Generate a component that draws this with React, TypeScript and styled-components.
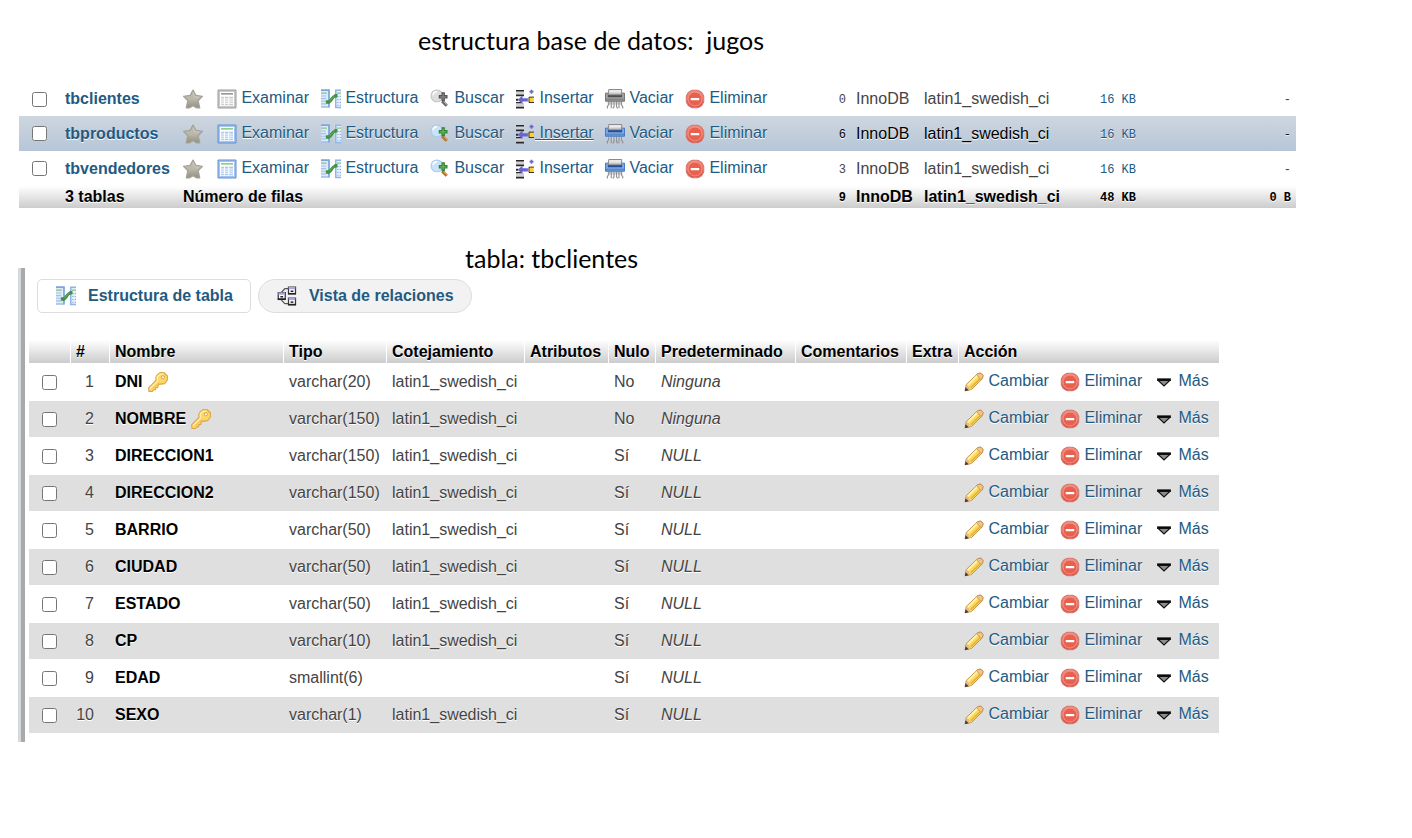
import React, { useId } from "react";
import styled, { createGlobalStyle } from "styled-components";

const GlobalStyle = createGlobalStyle`
  body {
    margin: 0;
    background: #fff;
    color: #444;
    font-family: "Liberation Sans", Arial, sans-serif;
    font-size: 16px;
    line-height: 20px;
  }
`;

const Page = styled.main`
  padding: 24px 0 24px 18px;
`;

const Title = styled.h1<{ $indent: number }>`
  margin: 0;
  padding-left: ${(p) => p.$indent}px;
  font-family: Lato, Calibri, sans-serif;
  font-size: 25px;
  line-height: 32px;
  font-weight: 400;
  color: #000;
  white-space: pre;
`;

const DatabaseSection = styled.section`
  margin: 26px 116px 34px 1px;
`;

const DataTable = styled.table`
  width: 100%;
  table-layout: fixed;
  border-collapse: separate;
  border-spacing: 0;
  text-shadow: 0 1px 0 #fff;
  white-space: nowrap;
`;

const Cell = styled.td<{ $align?: "right" | "center"; $endPad?: number }>`
  padding: 0 ${(p) => p.$endPad ?? 5}px 0 5px;
  text-align: ${(p) => p.$align ?? "left"};
`;

const HeadCell = styled.th`
  height: 23px;
  padding: 1px 0 0 5px;
  box-sizing: border-box;
  text-align: left;
  color: #000;
  border-right: 1px solid #fff;

  &:last-child {
    border-right: 0;
  }
`;

const HeadRow = styled.tr`
  background: linear-gradient(#fff, #ccc);
`;

const TableRow = styled.tr<{ $hover: boolean }>`
  height: ${(p) => (p.$hover ? 35 : 34)}px;
  background: ${(p) => (p.$hover ? "linear-gradient(#ced6df, #b6c6d7)" : "#fff")};
  color: ${(p) => (p.$hover ? "#000" : "#444")};

  &:last-child {
    height: 35px;
  }
`;

const TotalRow = styled.tr`
  height: 22px;
  background: linear-gradient(#fff, #ccc);
  color: #000;
  font-weight: 700;
`;

const FieldRow = styled.tr`
  height: 38px;

  &:nth-child(even) {
    height: 36px;
    background: #dfdfdf;
  }
`;

const Check = styled.input`
  display: block;
  width: 15px;
  height: 15px;
  margin: 0 8px;
`;

const Link = styled.a`
  color: #235a81;
  text-decoration: none;
`;

const NameLink = styled(Link)`
  font-weight: 700;
`;

const Action = styled(Link)`
  display: flex;
  align-items: center;
`;

const ActionText = styled.span<{ $underlined?: boolean }>`
  white-space: pre;
  padding-bottom: 2px;
  text-decoration: ${(p) => (p.$underlined ? "underline" : "none")};
`;

const Mono = styled.span`
  font-family: "Liberation Mono", Consolas, monospace;
  font-size: 12px;
`;

const FieldName = styled.div`
  display: flex;
  align-items: center;
  gap: 5px;
  color: #000;
  font-weight: 700;
`;

const Panel = styled.section`
  margin-right: 193px;
  padding: 11px 0 9px 4px;
  border-left: 4px solid #a9a9a9;
`;

const PanelEdge = styled.div`
  margin-top: -6px;
  border-left: 3px solid #d3d9dd;
`;

const TabBar = styled.nav`
  display: flex;
  gap: 7px;
  margin: 0 0 27px 8px;
`;

const Tab = styled.a<{ $active?: boolean }>`
  display: flex;
  align-items: center;
  gap: 12px;
  height: 34px;
  padding: 0 17px 0 18px;
  box-sizing: border-box;
  border: 1px solid #ddd;
  border-radius: ${(p) => (p.$active ? 5 : 17)}px;
  background: ${(p) => (p.$active ? "#fff" : "#f2f2f2")};
  color: #235a81;
  font-weight: 700;
  text-decoration: none;
  white-space: nowrap;
`;

const IconBox = styled.svg`
  display: block;
  flex: none;
  width: 20px;
  height: 20px;
`;

type IconProps = { dim?: boolean };

const Icon = ({ children }: { children: React.ReactNode }) => (
  <IconBox viewBox="0 0 16 16" aria-hidden="true">{children}</IconBox>
);

const StarIcon = () => {
  const id = useId();
  return (
    <Icon>
      <defs>
        <linearGradient id={id} x1="0" y1="0" x2="0" y2="1">
          <stop offset="0" stopColor="#bdbab0" />
          <stop offset=".5" stopColor="#bcb9ac" />
          <stop offset="1" stopColor="#918d7e" />
        </linearGradient>
      </defs>
      <path d="M8 .9 10.3 5.1l5.2.7-3.4 3.6 1.3 5.7H11L8 13.3l-3 1.8H2.6l1.3-5.7L.5 5.8l5.2-.7z" fill={`url(#${id})`} stroke="#a5a297" strokeWidth="1" strokeLinejoin="round" />
      <path d="M8 2.6 9.3 6.2l3.5.3" fill="none" stroke="#cfcdc5" strokeWidth=".7" />
    </Icon>
  );
};

const BrowseIcon = ({ dim }: IconProps) => {
  const edge = dim ? "#9b9b9b" : "#5f8fd6";
  const light = dim ? "#c9c9c9" : "#a5c4ee";
  return (
    <Icon>
      <path d="M.8.8h14.4v14.4H.8z" fill={light} />
      <path d="M.8.8h14.4v14.4H.8z" fill="none" stroke={edge} strokeWidth=".8" />
      <path d="M2.4 2.4h11.2v11.2H2.4z" fill="#fff" />
      <path d="M3.2 3.9h9.6" stroke={dim ? "#777" : "#6bbf62"} strokeWidth="1" />
      <path d="M3.4 6.2h9.4v6.8H3.4z" fill={light} />
      <path d="M3.4 8h9.4M3.4 9.7h9.4M3.4 11.4h9.4M5.9 6.2V13M9.4 6.2V13" stroke="#fff" strokeWidth=".8" />
    </Icon>
  );
};

const StructureIcon = () => (
  <Icon>
    <path d="M0 .5h6.4v14.3H0z" fill="#dce9fa" />
    <path d="M0 .9h6.4v13.9" fill="none" stroke="#7da5dd" strokeWidth="1.4" />
    <path d="M0 3.3h4.6" stroke="#86c77f" strokeWidth="1" />
    <path d="M0 5.6h4M0 7.7h4M0 9.8h4M0 11.9h4" stroke="#a3c1ec" strokeWidth=".9" />
    <path d="M0 14.4h6.4" stroke="#8bb0e5" strokeWidth=".9" />
    <path d="M11 .5h5v14.3h-5z" fill="#e4eefb" />
    <path d="M16 .9h-4.2v13.9H16" fill="none" stroke="#8fb5e9" strokeWidth="1.2" />
    <path d="M12.6 3.3H16" stroke="#86c77f" strokeWidth="1" />
    <path d="M13 6h1M15 6h1M13 8.4h1M15 8.4h1M13 10.8h1M15 10.8h1M13 13h1M15 13h1" stroke="#89ace0" strokeWidth=".9" />
    <path d="M5.4 10.5c3.1.2 2.7-4.5 6.3-5" fill="none" stroke="#3b853d" strokeWidth="2.4" />
    <path d="M5.4 10.3c2.9 0 2.6-4.3 6.3-4.9" fill="none" stroke="#57a852" strokeWidth="1.2" />
    <path d="M3.9 9h2.8v2.8H3.9zM10.8 4h2.4v2.8h-2.4z" fill="#439244" />
  </Icon>
);

const SearchIcon = ({ dim }: IconProps) => (
  <Icon>
    <path d="m9.8 9.8 3.6 3.6" stroke={dim ? "#686868" : "#b86f26"} strokeWidth="2.5" />
    <path d="m10.6 9.9 2.8 2.8" stroke={dim ? "#b0b0b0" : "#e7a85e"} strokeWidth=".8" />
    <circle cx="5.5" cy="5.5" r="4.7" fill={dim ? "#dedede" : "#cbe3fa"} stroke={dim ? "#c4c4c4" : "#a9cbed"} strokeWidth=".9" />
    <path d="M2.4 5c.2-1.9 1.4-2.9 3.2-2.8" fill="none" stroke="#fff" strokeWidth="1.1" />
    <path d="M9.2 2.6h2.7v2.2H14v2.8h-2.1v2.2H9.2V7.6H7V4.8h2.2z" fill={dim ? "#555" : "#348135"} />
    <path d="M10.5 3.6v4.9M8 6.2h5" stroke={dim ? "#858585" : "#62b652"} strokeWidth="1" />
  </Icon>
);

const InsertIcon = () => (
  <Icon>
    <path d="M.8 2h6.4v2.4H.8zM.8 11.3h6.4v2.8H.8z" fill="#d0d0d0" />
    <path d="M.8.7h6.4V2H.8zM.8 4.4h6.4v1.3H.8zM.8 7.8h1.8v1.6H.8zM.8 10.4h4.4v.9H.8zM.8 14.1h6.4v1.4H.8z" fill="#292929" />
    <path d="M2.2 8.6 6 5.2v2.1h4.3V10H6v2.1z" fill="#6864cf" />
    <path d="M13.2.5v3.2M11.6 2.1h3.2" stroke="#6864cf" strokeWidth="1.3" />
    <path d="M11.3 6.6H15v4h-3.7z" fill="#ffce35" />
    <path d="M15.2 6.5h-4v4.3h4" fill="none" stroke="#3c3520" strokeWidth=".8" />
  </Icon>
);

const EmptyIcon = ({ dim }: IconProps) => (
  <Icon>
    <path d="M2.1 10h11.8v2.5H2.1z" fill="#d5d5d5" />
    <path d="M3 10v2.5L1.9 14v1.5M5 10v5.4M7.2 10v4.4l-1 1.1M9.2 10v4.3l1 1.2M11.2 10v5.4M13.1 10v2.6l1.1 1.5v1.4" fill="none" stroke="#909090" strokeWidth=".9" />
    <path d="M.4 3.3h15.2v6.5H.4z" fill={dim ? "#a2a2a2" : "#7eaae3"} stroke={dim ? "#777" : "#457bc5"} strokeWidth=".8" />
    <path d="M.8 7.7h14.4v1.7H.8z" fill={dim ? "#858585" : "#568bd1"} />
    <path d="M2.3 3.9h11.4v2.7H2.3z" fill={dim ? "#505050" : "#244f92"} />
    <path d="M3 .4h10.4l-.3 4.2H2.7z" fill="#e9e9e9" stroke="#8b8b8b" strokeWidth=".8" />
    <path d="M3.3 3.4h9.5" stroke="#bbb" strokeWidth=".8" />
  </Icon>
);

const DeleteIcon = () => {
  const id = useId();
  return (
    <Icon>
      <defs>
        <linearGradient id={id} x1="0" y1="0" x2="0" y2="1">
          <stop offset="0" stopColor="#ef8f82" />
          <stop offset="1" stopColor="#dc5148" />
        </linearGradient>
      </defs>
      <path d="M5.6 1h4.8l3 1.6L15 5.6v4.8l-1.6 3-3 1.6H5.6l-3-1.6-1.6-3V5.6l1.6-3z" fill={`url(#${id})`} stroke="#d9746b" strokeWidth=".8" strokeLinejoin="round" />
      <circle cx="8" cy="8" r="5.6" fill="#e9604f" stroke="#f3a298" strokeWidth=".6" />
      <path d="M4.6 7.2h6.8v1.8H4.6z" fill="#fff" />
    </Icon>
  );
};

const RelationIcon = () => (
  <Icon>
    <path d="M3.5 5.2 6.3 2H9M3.5 11.3l2.8 2.8H9" fill="none" stroke="#555" strokeWidth="1" />
    {[[.6, 4.9], [8.8, .5], [8.8, 9.2]].map(([x, y]) => (
      <g key={`${x}-${y}`} transform={`translate(${x} ${y})`}>
        <path d="M.4.4h5.6v5.2H.4z" fill="#fff" stroke="#36363c" strokeWidth="1" />
        <path d="M.5.2h5.3v1.9H.5z" fill="#aaa5dc" />
        <path d="M2.1 3.7h2.2" stroke="#222" strokeWidth="1.2" />
        <path d="M0 5.7h6.4" stroke="#222" strokeWidth="1.3" />
      </g>
    ))}
  </Icon>
);

const KeyIcon = () => (
  <Icon>
    <path d="M7.1 2.5 9.6.5l3.3.1 2.6 2.6v3.2l-2.2 2.9-3.2.4-1-.1-1 1.1-.2 1.6-1.6.2-.3 1.6-1.6.3-.9 1.2-2.7.1-.3-3 6-6.1-.3-2z" fill="#fbd967" stroke="#dfa441" strokeWidth=".9" strokeLinejoin="round" />
    <path d="m1.5 13.4 6.1-6.2-.2-3.4 2.4-2.1 2.7.1" fill="none" stroke="#ffeeb0" strokeWidth="1" />
    <path d="m3.4 13.8 5.2-5.2" stroke="#eab945" strokeWidth=".8" />
    <circle cx="11.9" cy="4.2" r="1.3" fill="#fff4d5" stroke="#d99b32" strokeWidth=".7" />
  </Icon>
);

const PencilIcon = () => (
  <Icon>
    <path d="m.9 14.9.9-4.9 9.1-8.7 2.6-.5 1.7 1.9-.4 2.6L6 14z" fill="#f8d95c" stroke="#c7914a" strokeWidth=".8" strokeLinejoin="round" />
    <path d="m3 10.6 7.8-7.8" stroke="#fff3a8" strokeWidth="1.6" />
    <path d="m5.4 12.6 7.8-7.6" stroke="#e3ac33" strokeWidth="1" />
    <path d="m11 1.3 2.5-.4 1.7 1.8-.4 2.4-1.3.9-3.4-3.8z" fill="#f0c58c" stroke="#c48a4b" strokeWidth=".6" />
    <path d="m1.8 10.3 2.1 1.1.3 1.7 1.5.8-4.7 1z" fill="#e6ba85" />
    <path d="m1.3 12.2-.7 3.2 3.2-.8z" fill="#4a3b2a" />
  </Icon>
);

const MoreIcon = () => (
  <Icon>
    <path d="M2.5 5.1h11v2h-11z" fill="#080808" />
    <path d="M3.4 6.8h9.2L8 11.2z" fill="#8d8d8d" stroke="#111" strokeWidth=".9" />
  </Icon>
);

const RowAction = ({ icon, label, underlined }: { icon: React.ReactNode; label: string; underlined?: boolean }) => (
  <Action href="#">
    {icon}
    <ActionText $underlined={underlined}>{"\u00a0" + label}</ActionText>
  </Action>
);

const Columns = ({ widths }: { widths: number[] }) => (
  <colgroup>
    {widths.map((w, i) => <col key={i} width={w} />)}
    <col />
  </colgroup>
);

const tables = [
  { name: "tbclientes", rows: 0, hover: false },
  { name: "tbproductos", rows: 6, hover: true },
  { name: "tbvendedores", rows: 3, hover: false },
];

const headings = ["", "#", "Nombre", "Tipo", "Cotejamiento", "Atributos", "Nulo", "Predeterminado", "Comentarios", "Extra"];

const collation = "latin1_swedish_ci";

const fields = [
  { name: "DNI", type: "varchar(20)", key: true },
  { name: "NOMBRE", type: "varchar(150)", key: true },
  { name: "DIRECCION1", type: "varchar(150)" },
  { name: "DIRECCION2", type: "varchar(150)" },
  { name: "BARRIO", type: "varchar(50)" },
  { name: "CIUDAD", type: "varchar(50)" },
  { name: "ESTADO", type: "varchar(50)" },
  { name: "CP", type: "varchar(10)" },
  { name: "EDAD", type: "smallint(6)" },
  { name: "SEXO", type: "varchar(1)" },
];

const DatabaseTable = () => (
  <DataTable>
    <Columns widths={[41, 118, 34, 104, 109, 85, 90, 80, 94, 77, 68, 149, 73]} />
    <tbody>
      {tables.map((t) => {
        const dim = t.rows === 0;
        return (
          <TableRow key={t.name} $hover={t.hover}>
            <Cell><Check type="checkbox" aria-label={t.name} /></Cell>
            <Cell><NameLink href="#">{t.name}</NameLink></Cell>
            <Cell><StarIcon /></Cell>
            <Cell><RowAction icon={<BrowseIcon dim={dim} />} label="Examinar" /></Cell>
            <Cell><RowAction icon={<StructureIcon />} label="Estructura" /></Cell>
            <Cell><RowAction icon={<SearchIcon dim={dim} />} label="Buscar" /></Cell>
            <Cell><RowAction icon={<InsertIcon />} label="Insertar" underlined={t.hover} /></Cell>
            <Cell><RowAction icon={<EmptyIcon dim={dim} />} label="Vaciar" /></Cell>
            <Cell><RowAction icon={<DeleteIcon />} label="Eliminar" /></Cell>
            <Cell $align="right"><Mono>{t.rows}</Mono></Cell>
            <Cell>InnoDB</Cell>
            <Cell>{collation}</Cell>
            <Cell $align="right"><Link href="#"><Mono>16 KB</Mono></Link></Cell>
            <Cell $align="right"><Mono>-</Mono></Cell>
          </TableRow>
        );
      })}
    </tbody>
    <tfoot>
      <TotalRow>
        <Cell />
        <Cell>3 tablas</Cell>
        <Cell colSpan={7}>Número de filas</Cell>
        <Cell $align="right"><Mono>9</Mono></Cell>
        <Cell>InnoDB</Cell>
        <Cell>{collation}</Cell>
        <Cell $align="right"><Mono>48 KB</Mono></Cell>
        <Cell $align="right"><Mono>0 B</Mono></Cell>
      </TotalRow>
    </tfoot>
  </DataTable>
);

const FieldsTable = () => (
  <DataTable>
    <Columns widths={[42, 39, 174, 103, 138, 84, 47, 140, 111, 52, 96, 94]} />
    <thead>
      <HeadRow>
        {headings.map((h) => <HeadCell key={h}>{h}</HeadCell>)}
        <HeadCell colSpan={3}>Acción</HeadCell>
      </HeadRow>
    </thead>
    <tbody>
      {fields.map((f, i) => (
        <FieldRow key={f.name}>
          <Cell><Check type="checkbox" aria-label={f.name} /></Cell>
          <Cell $align="right" $endPad={16}>{i + 1}</Cell>
          <Cell><FieldName>{f.name}{f.key && <KeyIcon />}</FieldName></Cell>
          <Cell $endPad={0}>{f.type}</Cell>
          <Cell>{f.name === "EDAD" ? "" : collation}</Cell>
          <Cell />
          <Cell>{f.key ? "No" : "Sí"}</Cell>
          <Cell><em>{f.key ? "Ninguna" : "NULL"}</em></Cell>
          <Cell />
          <Cell />
          <Cell><RowAction icon={<PencilIcon />} label="Cambiar" /></Cell>
          <Cell><RowAction icon={<DeleteIcon />} label="Eliminar" /></Cell>
          <Cell><RowAction icon={<MoreIcon />} label="Más" /></Cell>
        </FieldRow>
      ))}
    </tbody>
  </DataTable>
);

export default function App() {
  return (
    <>
      <GlobalStyle />
      <Page>
        <Title $indent={400}>{"estructura base de datos:  jugos"}</Title>
        <DatabaseSection>
          <DatabaseTable />
        </DatabaseSection>
        <Title as="h2" $indent={447}>tabla: tbclientes</Title>
        <PanelEdge>
          <Panel>
            <TabBar>
              <Tab href="#" $active><StructureIcon />Estructura de tabla</Tab>
              <Tab href="#"><RelationIcon />Vista de relaciones</Tab>
            </TabBar>
            <FieldsTable />
          </Panel>
        </PanelEdge>
      </Page>
    </>
  );
}
